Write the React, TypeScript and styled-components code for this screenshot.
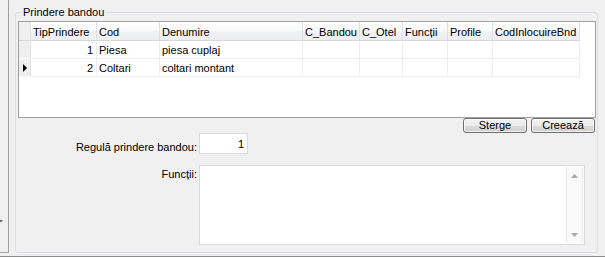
import React from "react";
import styled, { createGlobalStyle } from "styled-components";

const Global = createGlobalStyle`
  html, body { margin: 0; padding: 0; background: #f0f0f0; }
  body { font-family: "Liberation Sans", Arial, sans-serif; font-size: 11px; color: #000; }
`;

const FONT = `"Liberation Sans", Arial, sans-serif`;

const Frame = styled.div`
  width: 605px;
  height: 257px;
  box-sizing: border-box;
  border-bottom: 1px solid #8c8c8c;
  display: flex;
  align-items: flex-start;
  background: #f0f0f0;
  overflow: hidden;
`;

const SidePanel = styled.div`
  width: 9px;
  height: 253px;
  box-sizing: border-box;
  border-right: 1px solid #a0a0a0;
  border-bottom: 1px solid #a0a0a0;
  display: flex;
  flex-direction: column;
  justify-content: flex-end;
  padding-bottom: 29px;
`;

const SideArrow = styled.svg`
  display: block;
  margin-left: -1px;
`;

const Group = styled.fieldset`
  margin: 6px 0 0 6px;
  padding: 2px 1px 7px 2px;
  width: 583px;
  box-sizing: border-box;
  border: 1px solid #d5dfe5;
  border-radius: 3px;
  display: flex;
  flex-direction: column;
  min-inline-size: 0;
`;

const Title = styled.legend`
  margin-left: 3px;
  padding: 0 2px;
  font-family: ${FONT};
  font-size: 11px;
  line-height: 13px;
  color: #000;
`;

const Table = styled.div`
  height: 97px;
  box-sizing: border-box;
  border: 1px solid #a0a0a0;
  background: #fff;
  display: grid;
  grid-template-columns: 12px 66px 63px 143px 57px 43px 45px 45px 87px;
  grid-template-rows: 19px;
  grid-auto-rows: 18px;
  align-content: start;
  overflow: hidden;
`;

const HeadCell = styled.div<{ $corner?: boolean }>`
  box-sizing: border-box;
  border-right: 1px solid ${(p) => (p.$corner ? "#e2e2e2" : "#dcdfe3")};
  border-bottom: 1px solid #d5d8dc;
  background: ${(p) =>
    p.$corner
      ? "#efefef"
      : "linear-gradient(#ffffff 0%, #fbfbfc 45%, #f1f2f4 55%, #eceef1 100%)"};
  padding: 1px 2px 0 2px;
  line-height: 18px;
  white-space: nowrap;
  overflow: hidden;
`;

const RowHead = styled.div`
  box-sizing: border-box;
  border-right: 1px solid #e2e2e2;
  border-bottom: 1px solid #f8f8f8;
  background: #efefef;
  display: flex;
  align-items: center;
  padding-left: 4px;
`;

const Cell = styled.div<{ $right?: boolean }>`
  box-sizing: border-box;
  border-right: 1px solid #ececec;
  border-bottom: 1px solid #ececec;
  padding: 1px ${(p) => (p.$right ? "3px" : "2px")} 0 2px;
  line-height: 17px;
  text-align: ${(p) => (p.$right ? "right" : "left")};
  white-space: nowrap;
  overflow: hidden;
`;

const ButtonBar = styled.div`
  display: flex;
  justify-content: flex-end;
  gap: 4px;
  height: 15px;
  padding-right: 1px;
`;

const Button = styled.button`
  width: 64px;
  height: 15px;
  box-sizing: border-box;
  padding: 0;
  border: 1px solid #707070;
  border-radius: 3px;
  background: linear-gradient(#f2f2f2 0%, #ebebeb 50%, #dddddd 50%, #cfcfcf 100%);
  box-shadow: inset 0 0 0 1px rgba(255, 255, 255, 0.7);
  font-family: ${FONT};
  font-size: 11px;
  line-height: 13px;
  color: #000;
  overflow: hidden;
`;

const FieldRow = styled.div<{ $gap?: number; $h: number }>`
  display: flex;
  margin-top: ${(p) => p.$gap ?? 0}px;
  height: ${(p) => p.$h}px;
`;

const Label = styled.label<{ $top: number }>`
  width: 181px;
  box-sizing: border-box;
  padding-right: 2px;
  padding-top: ${(p) => p.$top}px;
  text-align: right;
  line-height: 13px;
  white-space: nowrap;
`;

const NumberBox = styled.input`
  width: 49px;
  height: 21px;
  box-sizing: border-box;
  margin: 0;
  border: 1px solid #d6d9dd;
  padding: 0 3px 0 0;
  background: #fff;
  font-family: ${FONT};
  font-size: 11px;
  line-height: 13px;
  text-align: right;
  color: #000;
  outline: none;
`;

const MemoBox = styled.div`
  width: 386px;
  height: 80px;
  box-sizing: border-box;
  border: 1px solid #d6d9dd;
  background: #fff;
  display: flex;
`;

const Memo = styled.textarea`
  flex: 1;
  border: none;
  margin: 0;
  padding: 2px;
  resize: none;
  outline: none;
  background: transparent;
  font-family: ${FONT};
  font-size: 11px;
`;

const ScrollBar = styled.div`
  width: 17px;
  margin: 1px 1px 1px 0;
  box-sizing: border-box;
  border-left: 1px solid #ebebeb;
  border-right: 1px solid #ebebeb;
  background: #fafafa;
  display: flex;
  flex-direction: column;
  justify-content: space-between;
`;

const ScrollArrow = styled.div`
  height: 17px;
  display: flex;
  align-items: center;
  justify-content: center;
`;

const columns = ["TipPrindere", "Cod", "Denumire", "C_Bandou", "C_Otel", "Funcții", "Profile", "CodInlocuireBnd"];

const rows = [
  { id: "1", cod: "Piesa", den: "piesa cuplaj", current: false },
  { id: "2", cod: "Coltari", den: "coltari montant", current: true },
];

const Tri = ({ up }: { up: boolean }) => (
  <svg width="7" height="4" viewBox="0 0 7 4">
    <polygon points={up ? "3.5,0 7,4 0,4" : "0,0 7,0 3.5,4"} fill="#a8a8a8" />
  </svg>
);

export default function App() {
  return (
    <>
      <Global />
      <Frame>
        <SidePanel>
          <SideArrow width="4" height="3" viewBox="0 0 4 3">
            <polygon points="0,0 4,0 2,2.5" fill="#707070" />
          </SideArrow>
        </SidePanel>
        <Group>
          <Title>Prindere bandou</Title>
          <Table>
            <HeadCell $corner />
            {columns.map((c) => (
              <HeadCell key={c}>{c}</HeadCell>
            ))}
            {rows.map((r) => (
              <React.Fragment key={r.id}>
                <RowHead>
                  {r.current && (
                    <svg width="4" height="8" viewBox="0 0 4 8">
                      <polygon points="0,0 4,4 0,8" fill="#000" />
                    </svg>
                  )}
                </RowHead>
                <Cell $right>{r.id}</Cell>
                <Cell>{r.cod}</Cell>
                <Cell>{r.den}</Cell>
                <Cell />
                <Cell />
                <Cell />
                <Cell />
                <Cell />
              </React.Fragment>
            ))}
          </Table>
          <ButtonBar>
            <Button>Sterge</Button>
            <Button>Creează</Button>
          </ButtonBar>
          <FieldRow $h={21}>
            <Label $top={8}>Regulă prindere bandou:</Label>
            <NumberBox readOnly value="1" />
          </FieldRow>
          <FieldRow $gap={11} $h={80}>
            <Label $top={3}>Funcții:</Label>
            <MemoBox>
              <Memo readOnly />
              <ScrollBar>
                <ScrollArrow>
                  <Tri up />
                </ScrollArrow>
                <ScrollArrow>
                  <Tri up={false} />
                </ScrollArrow>
              </ScrollBar>
            </MemoBox>
          </FieldRow>
        </Group>
      </Frame>
    </>
  );
}
